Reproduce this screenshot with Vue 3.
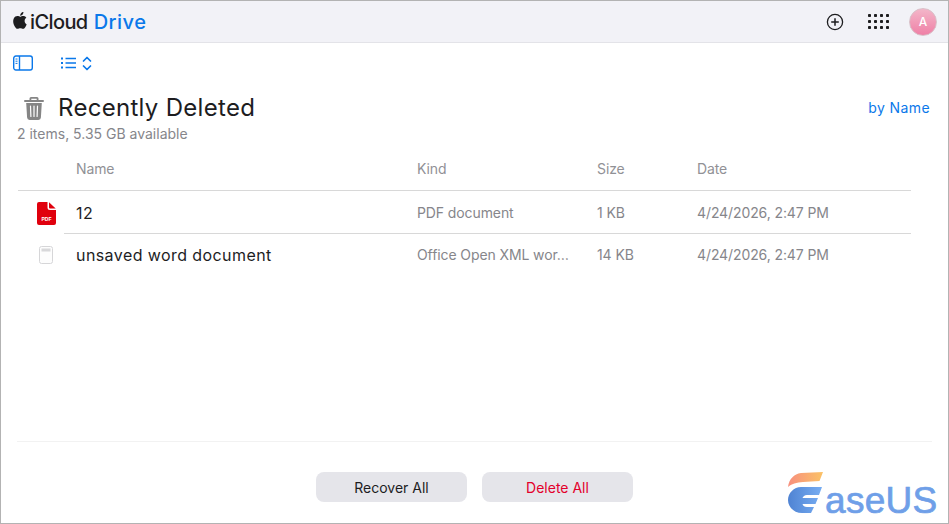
<script setup>
const rows = [
  { name: '12', kind: 'PDF document', size: '1 KB', date: '4/24/2026, 2:47 PM', type: 'pdf' },
  { name: 'unsaved word document', kind: 'Office Open XML wor…', size: '14 KB', date: '4/24/2026, 2:47 PM', type: 'doc' }
]
</script>

<template>
  <div class="page">
    <header class="topbar">
      <div class="brand">
        <svg class="apple" viewBox="1 1 14 16.200" width="15" height="17"><path fill="#1d1d1f" d="M11.900 9.500c0-2 1.600-2.900 1.700-3-1-1.400-2.400-1.600-2.900-1.600-1.200-.1-2.400.7-3 .7s-1.600-.7-2.600-.7C3.700 4.900 2.400 5.700 1.700 6.900.3 9.400 1.300 13 2.700 15c.7 1 1.500 2.100 2.500 2 1 0 1.400-.6 2.600-.6s1.500.6 2.600.6 1.800-1 2.400-2c.8-1.100 1.100-2.200 1.100-2.300-.1 0-2-.8-2-3.200zM10 3.500c.5-.7.9-1.600.8-2.500-.8 0-1.700.5-2.300 1.200-.5.6-.9 1.500-.8 2.400.9.1 1.800-.4 2.300-1.100z"/></svg>
        <span class="icloud">iCloud</span>
        <span class="drive">Drive</span>
      </div>
      <div class="top-actions">
        <svg class="plus" width="18" height="18" viewBox="0 0 18 18" fill="none" stroke="#1d1d1f"><circle cx="9" cy="9" r="7.600" stroke-width="1.300"/><path d="M9 5.200v7.600M5.200 9h7.600" stroke-width="1.500"/></svg>
        <svg width="21" height="15" viewBox="0 0 21 15" fill="#1d1d1f">
          <template v-for="y in [0, 6, 12]" :key="y">
            <rect v-for="x in [0, 6, 12, 18]" :key="x" :x="x" :y="y" width="3" height="3" rx="0.800" />
          </template>
        </svg>
        <div class="avatar">A</div>
      </div>
    </header>

    <div class="toolbar">
      <svg width="20" height="16" viewBox="0 0 20 16" fill="none" stroke="#0a78ea"><rect x="0.700" y="1" width="18.600" height="14" rx="2.200" stroke-width="1.400"/><path d="M6.500 1v14" stroke-width="1.400"/><path d="M2.500 4h2M2.500 6.200h2M2.500 8.400h2" stroke-width="1"/></svg>
      <div class="view-switch">
        <svg width="15" height="12" viewBox="0 0 15 12" fill="none" stroke="#0a78ea" stroke-width="1.400"><path d="M4.500 1.500H15M4.500 6H15M4.500 10.500H15"/><path d="M0 1.500h2M0 6h2M0 10.500h2" stroke-width="1.900"/></svg>
        <svg width="10" height="15" viewBox="0 0 10 15" fill="none" stroke="#0a78ea" stroke-width="1.700" stroke-linecap="round" stroke-linejoin="round"><path d="M1.500 5 5 1.500 8.500 5M1.500 10 5 13.500 8.500 10"/></svg>
      </div>
    </div>

    <section class="heading">
      <div class="title-row">
        <div class="title-left">
          <svg class="trash" width="20" height="23" viewBox="0 0 20 23" fill="none"><path fill="#858585" d="M7 0h6a1.500 1.500 0 0 1 1.500 1.500V3H19a1 1 0 0 1 0 2H1a1 1 0 0 1 0-2h4.500V1.500A1.500 1.500 0 0 1 7 0zm.3 1.700V3h5.400V1.700zM2.200 6h15.600l-.9 14.600A2.500 2.500 0 0 1 14.400 23H5.600a2.500 2.500 0 0 1-2.500-2.400z"/><path stroke="#fff" stroke-width="1.200" stroke-linecap="round" d="M6.500 9l.4 10.500M10 9v10.500M13.500 9l-.4 10.500"/></svg>
          <h1>Recently Deleted</h1>
        </div>
        <span class="sort">by Name</span>
      </div>
      <p class="sub">2 items, 5.35 GB available</p>
    </section>

    <div class="table">
      <div class="row head">
        <span class="c-icon"></span>
        <span class="c-name">Name</span>
        <span class="c-kind">Kind</span>
        <span class="c-size">Size</span>
        <span class="c-date">Date</span>
      </div>
      <div v-for="r in rows" :key="r.name" class="row item">
        <span class="c-icon">
          <svg v-if="r.type === 'pdf'" width="19" height="23" viewBox="0 0 19 23"><path fill="#e0000d" d="M2 0h8.500v5.500A2.500 2.500 0 0 0 13 8h6v13a2 2 0 0 1-2 2H2a2 2 0 0 1-2-2V2a2 2 0 0 1 2-2z"/><path fill="#e0000d" d="M12 .3 18.700 6.500H13A1 1 0 0 1 12 5.500z"/><text x="9.500" y="18.500" text-anchor="middle" class="pdf-label">PDF</text></svg>
          <svg v-else width="14" height="18" viewBox="0 0 14 18"><rect x="0.500" y="0.500" width="13" height="17" rx="2" fill="#fdfdfd" stroke="#d6d6d8"/><rect x="2.500" y="2.500" width="9" height="3" fill="#d8d8da"/></svg>
        </span>
        <span class="c-name">{{ r.name }}</span>
        <span class="c-kind small">{{ r.kind }}</span>
        <span class="c-size small">{{ r.size }}</span>
        <span class="c-date small">{{ r.date }}</span>
      </div>
    </div>

    <footer class="footer">
      <button class="btn recover">Recover All</button>
      <button class="btn delete">Delete All</button>
    </footer>

    <div class="logo">
      <svg width="36" height="42" viewBox="0 0 36 42">
        <defs>
          <linearGradient id="lgTop" x1="0" x2="1"><stop offset="0" stop-color="#f78f7e"/><stop offset="1" stop-color="#fbc266"/></linearGradient>
          <linearGradient id="lgBot" x1="0" x2="1"><stop offset="0" stop-color="#4f83d3"/><stop offset="1" stop-color="#77adf2"/></linearGradient>
        </defs>
        <path fill="url(#lgTop)" d="M0 15C1 7 6 2 13 1L35 0l-3.500 9L15 10C9 10.500 3 12 0 15z"/>
        <path fill="url(#lgBot)" d="M13 15H34L31 23H19C16.500 23 15 24.500 14.500 26H30L27.500 32H14.500C15 34 16.500 35 19 35H26L23 41H14C6 41 0 35 0 28C0 21 6 15 13 15z"/>
      </svg>
      <span class="logo-text">aseUS</span>
    </div>
  </div>
</template>

<style>
html, body { margin: 0; padding: 0; background: #fff; }
</style>

<style scoped>
.page {
  position: relative;
  width: 949px;
  height: 524px;
  box-sizing: border-box;
  border: 1px solid #b3b3b3;
  background: #fff;
  display: flex;
  flex-direction: column;
  font-family: Inter, "Liberation Sans", sans-serif;
  color: #1d1d1f;
  overflow: hidden;
}
.topbar {
  height: 42px;
  flex: none;
  box-sizing: border-box;
  background: #f2f2f7;
  border-bottom: 1px solid #e3e3e8;
  display: flex;
  align-items: center;
  justify-content: space-between;
  padding: 0 11px 0 12px;
}
.brand { display: flex; align-items: center; font-size: 20px; }
.apple { margin-right: 2px; margin-top: -2px; }
.icloud { color: #1d1d1f; margin-right: 6px; font-weight: 500; letter-spacing: -0.600px; }
.drive { color: #0a78ea; font-weight: 500; letter-spacing: 0.500px; }
.top-actions { display: flex; align-items: center; }
.plus { margin-right: 24px; }
.avatar {
  width: 28px;
  height: 28px;
  margin-left: 20px;
  border-radius: 50%;
  background: linear-gradient(#f3b6c9, #ef80a6);
  border: 1px solid #d9c0c8;
  box-sizing: border-box;
  color: #fff;
  font-size: 12px;
  font-weight: 500;
  display: flex;
  align-items: center;
  justify-content: center;
}
.toolbar {
  display: flex;
  align-items: center;
  height: 40px;
  flex: none;
  padding: 0 0 0 12px;
  box-sizing: border-box;
}
.view-switch { display: flex; align-items: center; gap: 6px; margin-left: 28px; }
.heading { padding: 10px 18px 0 16px; }
.title-row { display: flex; align-items: center; justify-content: space-between; height: 30px; }
.title-left { display: flex; align-items: center; }
.trash { margin-left: 7px; margin-right: 14px; }
h1 { margin: 0; font-size: 24px; font-weight: 400; line-height: 30px; color: #1d1d1f; letter-spacing: 0.300px; }
.sort { font-size: 14px; color: #0a78ea; letter-spacing: 0.400px; margin-bottom: 2px; }
.sub { margin: 1px 0 0; font-size: 14px; line-height: 20px; color: #86868b; }
.table { margin: 0 37px 0 17px; }
.row { display: flex; align-items: center; }
.head {
  height: 40px;
  padding-bottom: 2px;
  margin-top: 4px;
  border-bottom: 1px solid #d8d8d8;
  color: #919196;
  font-size: 14px;
  letter-spacing: -0.100px;
}
.item {
  height: 42px;
  box-sizing: border-box;
  padding-top: 2px;
  position: relative;
  color: #86868b;
  font-size: 14px;
  letter-spacing: -0.100px;
}
.item + .item::before {
  content: "";
  position: absolute;
  top: 0;
  left: 46px;
  right: 0;
  height: 1px;
  background: #d8d8d8;
}
.small { margin-top: -2px; }
.c-icon { width: 58px; flex: none; display: flex; justify-content: center; box-sizing: border-box; padding-right: 2px; }
.pdf-label { font: 700 5px "Liberation Sans", sans-serif; fill: #fff; letter-spacing: 0; }
.c-name { width: 341px; flex: none; }
.item .c-name { font-size: 16px; color: #1d1d1f; letter-spacing: 0.420px; }
.c-kind { width: 154px; flex: none; margin-right: 26px; white-space: nowrap; }
.c-size { width: 100px; flex: none; }
.c-date { flex: none; }
.footer {
  position: absolute;
  left: 16px;
  right: 16px;
  top: 440px;
  height: 82px;
  border-top: 1px solid #f2f2f2;
  display: flex;
  justify-content: center;
  gap: 15px;
  padding: 30px 0 0 0;
  box-sizing: border-box;
}
.btn {
  width: 151px;
  height: 30px;
  border: none;
  border-radius: 8px;
  background: #e5e5ea;
  font: 400 14px Inter, "Liberation Sans", sans-serif;
  padding: 0;
}
.recover { color: #1d1d1f; }
.delete { color: #e3002b; }
.logo { position: absolute; left: 787px; top: 471px; display: flex; align-items: flex-end; }
.logo-text {
  font-family: "Liberation Sans", Arial, sans-serif;
  font-size: 37px;
  line-height: 37px;
  letter-spacing: 0.300px;
  color: #6f9fe8;
  -webkit-text-stroke: 0.700px #6f9fe8;
  margin-left: 1px;
  margin-bottom: -5px;
}
</style>
